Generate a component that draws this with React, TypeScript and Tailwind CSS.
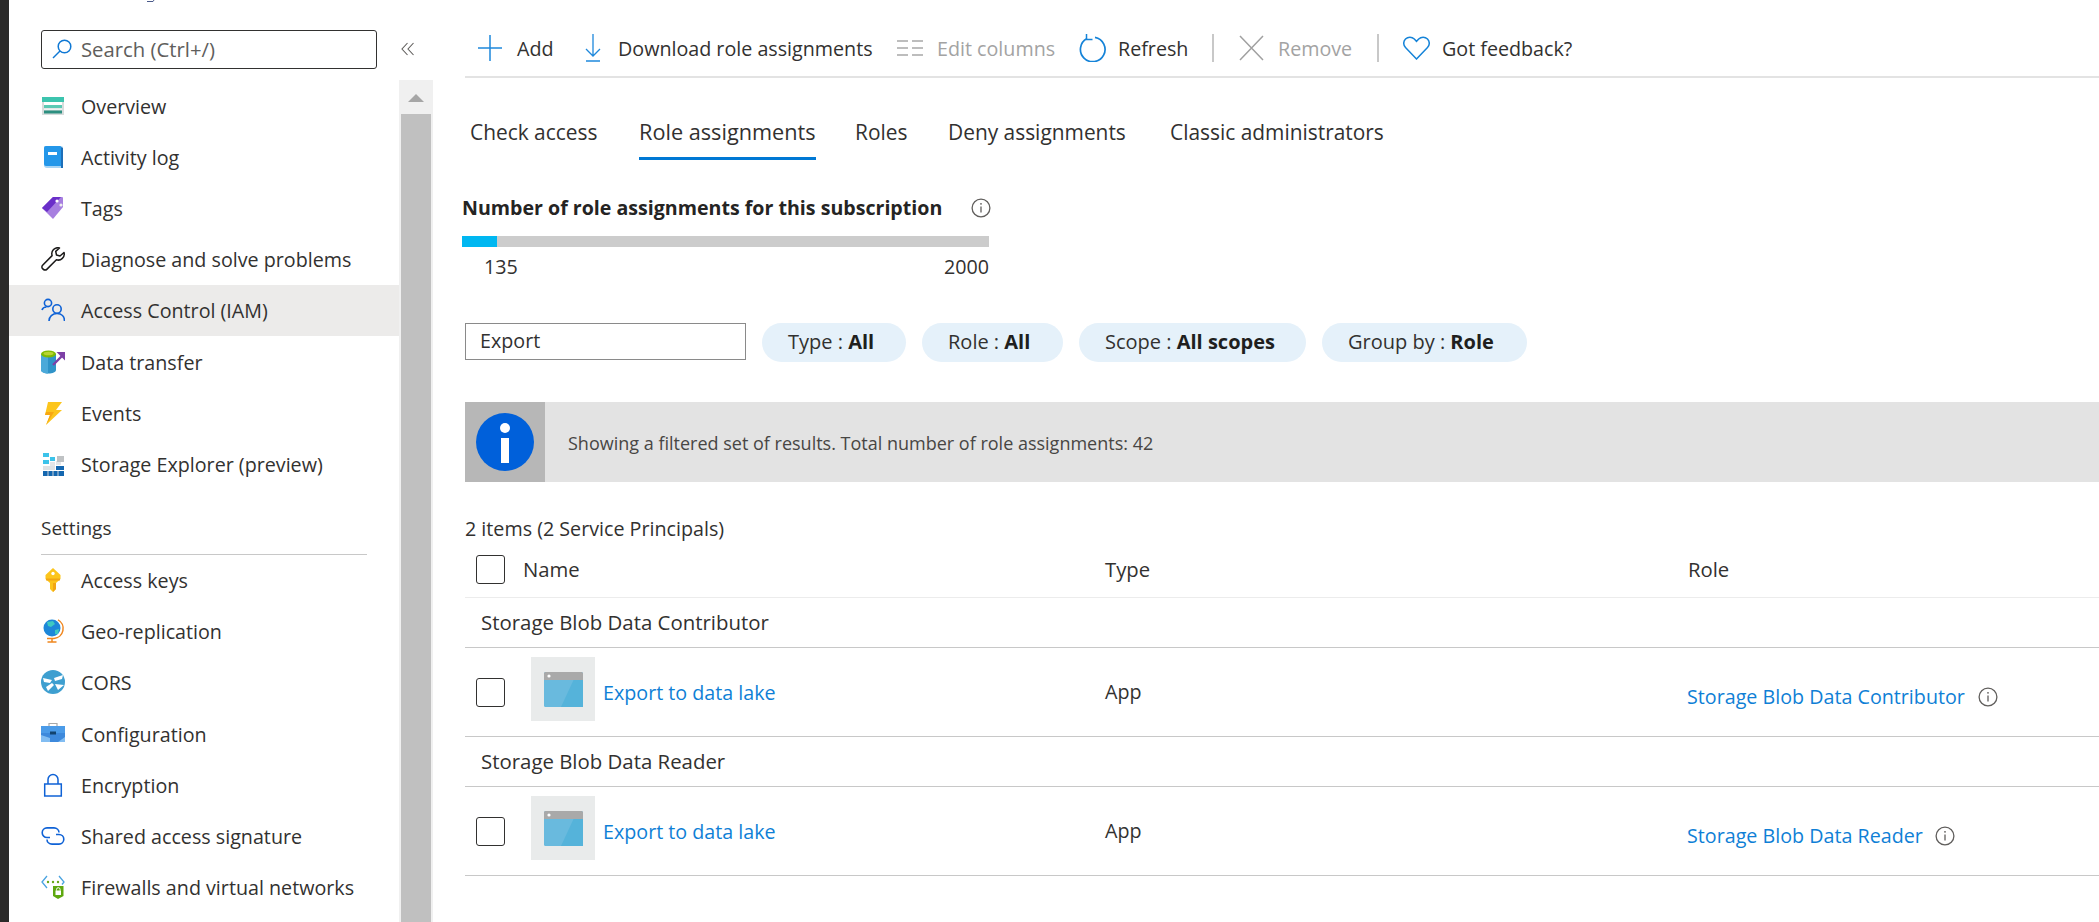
import React from "react";

const Ic = ({ children, w = 24, h = 24 }: { children: React.ReactNode; w?: number; h?: number }) => (
  <svg width={w} height={h} viewBox={`0 0 ${w} ${h}`} fill="none" className="block shrink-0">
    {children}
  </svg>
);

const Overview = () => (
  <Ic>
    <rect x="1" y="3" width="22" height="18" fill="#d8dcdc" />
    <rect x="1" y="3" width="22" height="5" fill="#3cc4ae" />
    <rect x="3" y="8" width="18" height="3" fill="#fff" />
    <rect x="3" y="11" width="18" height="3" fill="#5cc9b4" />
    <rect x="3" y="14.500" width="18" height="1.500" fill="#eef2f2" />
    <rect x="3" y="16.500" width="18" height="3" fill="#2c8f80" />
  </Ic>
);
const Book = () => (
  <Ic>
    <path d="M4 1h16a2 2 0 0 1 2 2v20H6a3 3 0 0 1-3-3V2z" fill="#a8d4f4" />
    <path d="M3 3a2 2 0 0 1 2-2h14a1 1 0 0 1 1 1v19H5a2 2 0 0 1-2-2z" fill="#2497e9" />
    <rect x="7" y="7" width="9" height="3" fill="#fff" />
    <path d="M20 2l2 1v20h-2z" fill="#1d6fb8" />
  </Ic>
);
const Tag = () => (
  <Ic>
    <path d="M1 12L12 1h9a1 1 0 0 1 1 1v9L12 23z" fill="#a77fe0" />
    <path d="M1 12L12 1h8L6 16z" fill="#6a2fc9" />
    <circle cx="16" cy="5" r="1.600" fill="#fff" />
    <circle cx="20" cy="9" r="1.600" fill="#eee" />
  </Ic>
);
const Wrench = () => (
  <Ic>
    <path
      d="M23 5.500l-4 3.500-3.500-1-.8-3.600L18.500 1a6 6 0 0 0-7.400 7.600L1.600 18.200a2.400 2.400 0 0 0 0 3.400l.8.8a2.400 2.400 0 0 0 3.400 0l9.600-9.600A6 6 0 0 0 23 5.500z"
      stroke="#1b1a19"
      strokeWidth="1.500"
      strokeLinejoin="round"
    />
  </Ic>
);
const People = () => (
  <Ic>
    <circle cx="7" cy="5" r="3.600" stroke="#0f62d6" strokeWidth="1.600" />
    <path d="M1 12c.6-2 2.600-3 4.500-3" stroke="#0f62d6" strokeWidth="1.600" />
    <circle cx="16" cy="11" r="4.200" stroke="#0f62d6" strokeWidth="1.600" />
    <path d="M8 23c0-4.500 3.500-7.500 8-7.500s7.500 3 7.500 7.500" stroke="#0f62d6" strokeWidth="1.600" />
  </Ic>
);
const Transfer = () => (
  <Ic>
    <path d="M0 4v16c0 2 3.500 3.500 7.500 3.500S15 22 15 20V4z" fill="#2f93c8" />
    <path d="M0 4v16c0 2 3.500 3.500 7 3.500V4z" fill="#4ba9d9" />
    <ellipse cx="7.500" cy="4" rx="7.500" ry="3.500" fill="#7fba00" />
    <ellipse cx="7.500" cy="3.500" rx="5" ry="1.800" fill="#b8d432" />
    <path d="M12 15L22 5" stroke="#7d3fa6" strokeWidth="2.400" />
    <path d="M15.500 2H24v8.500z" fill="#7d3fa6" />
  </Ic>
);
const Bolt = () => (
  <Ic>
    <path d="M7 1h14l-6 8h6L5 24l4-10H4z" fill="#fcc51c" />
    <path d="M5 24l4-10H4l1-3 8 0z" fill="#f7a711" />
  </Ic>
);
const Explorer = () => (
  <Ic>
    <rect x="2" y="1" width="6" height="4" fill="#3cc3ea" />
    <rect x="2" y="8" width="6" height="4" fill="#3cc3ea" />
    <rect x="9" y="5" width="5" height="4" fill="#3cc3ea" />
    <rect x="15" y="9" width="5" height="4" fill="#e4e6e8" />
    <rect x="9" y="10" width="5" height="4" fill="#e4e6e8" />
    <rect x="16" y="4" width="7" height="6" fill="#bfc2c4" />
    <rect x="15" y="14" width="8" height="4" fill="#1467b0" />
    <rect x="2" y="14" width="12" height="4" fill="#dfe2e4" />
    <rect x="2" y="19" width="21" height="5" fill="#1467b0" />
    <path d="M7 19v5M12 19v5M17 19v5" stroke="#cfd3d6" strokeWidth="1" />
  </Ic>
);
const Key = () => (
  <Ic>
    <path d="M12 0l7.500 7v4L15 15v6l-3 3-3-3v-6L4.500 11V7z" fill="#fcc51c" />
    <circle cx="12" cy="5.500" r="1.700" fill="#fff" />
    <path d="M5 10.500h14v2H5z" fill="#f2a614" />
    <path d="M12 15h3v6l-3 3z" fill="#f2a614" />
  </Ic>
);
const Globe = () => (
  <Ic>
    <circle cx="11" cy="9" r="8.500" fill="#1d87d9" />
    <path d="M6 3l6-1 2 3-4 3-3-1zM14 11l4-1-1 5-3 0z" fill="#3ec9c1" />
    <path d="M17 0.800a10 10 0 0 1-4 18.700H6" stroke="#f0861e" strokeWidth="1.500" />
    <path d="M11 19.500v3M6.500 23h9" stroke="#f0861e" strokeWidth="1.500" />
  </Ic>
);
const Cors = () => (
  <Ic>
    <circle cx="12" cy="12" r="12" fill="#3e9fd0" />
    <path d="M2 8l9 2-2 3-6-1zM22 5l-9 3 1 3 7-2zM7 21l6-6-2-2-6 4zM23 15l-9-1 3 6z" fill="#fff" />
  </Ic>
);
const Toolbox = () => (
  <Ic>
    <path d="M8 5V1.500h8V5" stroke="#a9a9a9" strokeWidth="1.200" />
    <rect x="0" y="4" width="24" height="7" fill="#4b9be8" />
    <rect x="0" y="11" width="24" height="9" fill="#3d89dc" />
    <path d="M0 13l9 3v4H0zM17 20l7-5v5z" fill="#82bdf2" />
    <rect x="9" y="9.500" width="6" height="3" fill="#12436e" />
  </Ic>
);
const Lock = () => (
  <Ic>
    <rect x="3.700" y="11" width="16.600" height="12" stroke="#0f62d6" strokeWidth="1.500" />
    <path d="M7 11V6.500a5 5 0 0 1 10 0V11" stroke="#0f62d6" strokeWidth="1.500" />
  </Ic>
);
const Chain = () => (
  <Ic>
    <path d="M9 13.500H6a4.800 4.800 0 0 1 0-9.600h7c2.800 0 5 2 5 4.600" stroke="#0f62d6" strokeWidth="1.600" />
    <path d="M15 10.500h3a4.800 4.800 0 0 1 0 9.600h-7c-2.800 0-5-2-5-4.600" stroke="#0f62d6" strokeWidth="1.600" />
  </Ic>
);
const Firewall = () => (
  <Ic>
    <path d="M6 1L1 7l5 6M18 1l5 6-2 2.500" stroke="#4aa3e0" strokeWidth="1.300" />
    <circle cx="7" cy="7" r="1.200" fill="#6aa81a" />
    <circle cx="12" cy="7" r="1.200" fill="#6aa81a" />
    <circle cx="17" cy="7" r="1.200" fill="#6aa81a" />
    <path d="M12 11h10.500v10L17 24l-5-3z" fill="#5ea80f" />
    <rect x="14.500" y="15.500" width="5.500" height="4.500" fill="#fff" />
    <path d="M15.500 15.500v-1a1.800 1.800 0 0 1 3.600 0v1" stroke="#fff" strokeWidth="1" />
  </Ic>
);

const first = [
  { t: "Overview", i: <Overview /> },
  { t: "Activity log", i: <Book /> },
  { t: "Tags", i: <Tag /> },
  { t: "Diagnose and solve problems", i: <Wrench /> },
  { t: "Access Control (IAM)", i: <People />, a: true },
  { t: "Data transfer", i: <Transfer /> },
  { t: "Events", i: <Bolt /> },
  { t: "Storage Explorer (preview)", i: <Explorer /> },
];
const second = [
  { t: "Access keys", i: <Key /> },
  { t: "Geo-replication", i: <Globe /> },
  { t: "CORS", i: <Cors /> },
  { t: "Configuration", i: <Toolbox /> },
  { t: "Encryption", i: <Lock /> },
  { t: "Shared access signature", i: <Chain /> },
  { t: "Firewalls and virtual networks", i: <Firewall /> },
];

const NavRow = ({ t, i, a }: { t: string; i: React.ReactNode; a?: boolean }) => (
  <div className={`h-[51.2px] flex items-center pl-[32px] gap-[16px] ${a ? "bg-[#ecebea]" : ""}`}>
    {i}
    <span className="whitespace-nowrap mt-[2px]">{t}</span>
  </div>
);

const InfoCircle = () => (
  <svg width="20" height="20" viewBox="0 0 20 20" fill="none" className="block shrink-0">
    <circle cx="10" cy="10" r="8.900" stroke="#605e5c" strokeWidth="1.300" />
    <path d="M10 8.500v6" stroke="#605e5c" strokeWidth="1.300" />
    <circle cx="10" cy="5.800" r="0.900" fill="#605e5c" />
  </svg>
);

const Tool = ({ w, iw, icon, text, muted }: { w: string; iw: string; icon: React.ReactNode; text: string; muted?: boolean }) => (
  <div className={`flex items-center shrink-0 ${w}`}>
    <div className={`shrink-0 ${iw}`}>{icon}</div>
    <span className={`whitespace-nowrap mt-[1px] ${muted ? "text-[#a3a3a3]" : ""}`}>{text}</span>
  </div>
);

const Chip = ({ w, a, b }: { w: string; a: string; b: string }) => (
  <div className={`h-[39px] pb-[2px] rounded-full bg-[#e5f1fa] flex items-center pl-[26px] text-[20px] whitespace-nowrap shrink-0 ${w}`}>
    {a}&nbsp;:&nbsp;<b className="font-bold text-[#201f1e]">{b}</b>
  </div>
);

const Check = () => <div className="w-[29px] h-[29px] rounded-[3px] border border-[#323130] shrink-0" />;

const AppThumb = () => (
  <div className="w-[64px] h-[64px] bg-[#e9ebeb] flex items-center justify-center shrink-0">
    <svg width="39" height="35" viewBox="0 0 39 35" className="block">
      <rect width="39" height="35" rx="1.500" fill="#69bade" />
      <path d="M17 35L30 7h9v28z" fill="#55b3da" />
      <path d="M0 1.500A1.500 1.500 0 0 1 1.500 0h36A1.500 1.500 0 0 1 39 1.500V8H0z" fill="#a9a9a9" />
      <circle cx="5" cy="4" r="1.600" fill="#fff" />
    </svg>
  </div>
);

const Group = ({ title, role, w }: { title: string; role: string; w: string }) => (
  <>
    <div className="h-[50px] pb-[1px] flex items-center pl-[16px] border-b border-[#c8c8c8] font-medium text-[20.4px]">{title}</div>
    <div className="h-[89px] grid grid-cols-[640px_583px_1fr] items-center border-b border-[#c8c8c8]">
      <div className="flex items-center pl-[11px]">
        <Check />
        <div className="ml-[26px] -mt-[6px]">
          <AppThumb />
        </div>
        <a className="ml-[8px] mt-[1px] text-[#0f7fd6] whitespace-nowrap">Export to data lake</a>
      </div>
      <div>App</div>
      <div className="flex items-center mt-[9px] -ml-[1px]">
        <a className={`text-[#0f7fd6] whitespace-nowrap ${w}`}>{role}</a>
        <InfoCircle />
      </div>
    </div>
  </>
);

export default function App() {
  return (
    <div className="relative flex w-[2099px] h-[922px] overflow-hidden bg-white text-[#323130] text-[19.7px] leading-[28px] font-['Open_Sans',sans-serif]">
      <div className="w-[9px] bg-[#2b2a29] shrink-0" />
      <svg width="10" height="3" viewBox="0 0 10 3" className="absolute left-[146px] top-0">
        <path d="M1 1.500h6L8 0" stroke="#4a5a8a" strokeWidth="1" fill="none" />
      </svg>

      <div className="w-[424px] shrink-0 flex flex-col">
        <div className="h-[80px] shrink-0 flex pt-[30px] pl-[32px]">
          <div className="w-[336px] h-[39px] pb-[2px] rounded-[3px] border border-[#323130] flex items-center pl-[10px] gap-[9px] text-[#605e5c] text-[20.3px]">
            <svg width="20" height="20" viewBox="0 0 20 20" fill="none" className="shrink-0">
              <circle cx="12.500" cy="7.500" r="6.300" stroke="#0f78d4" strokeWidth="1.500" />
              <path d="M8 12L1 19" stroke="#0f78d4" strokeWidth="1.500" />
            </svg>
            Search (Ctrl+/)
          </div>
          <svg width="14" height="14" viewBox="0 0 14 14" fill="none" className="ml-[24px] mt-[12px] shrink-0">
            <path d="M6.500 1L1 7l5.500 6M12.500 1L7 7l5.500 6" stroke="#605e5c" strokeWidth="1.100" />
          </svg>
        </div>
        <div className="flex flex-1 min-h-0">
          <div className="w-[390px] shrink-0">
            {first.map((r) => (
              <NavRow key={r.t} {...r} />
            ))}
            <div className="h-[65px] mx-[32px] pt-[24px] border-b border-[#c8c8c8] font-medium text-[19px] w-[326px]">Settings</div>
            {second.map((r) => (
              <NavRow key={r.t} {...r} />
            ))}
          </div>
          <div className="w-[34px] shrink-0 bg-[#f0f0f0] flex flex-col">
            <div className="h-[34px] shrink-0 flex justify-center pt-[14px]">
              <div className="w-0 h-0 border-l-[8px] border-r-[8px] border-b-[8px] border-l-transparent border-r-transparent border-b-[#a6a6a6]" />
            </div>
            <div className="flex-1 mx-[2px] bg-[#c0c0c0]" />
          </div>
        </div>
      </div>

      <div className="flex-1 min-w-0 flex flex-col pl-[32px]">
        <div className="h-[78px] pt-[20px] shrink-0 border-b-2 border-[#e3e3e3] flex items-center pl-[13px]">
          <Tool
            w="w-[107px]"
            iw="w-[39px]"
            text="Add"
            icon={
              <svg width="24" height="26" viewBox="0 0 24 26" fill="none" className="block">
                <path d="M12 0v26M0 13h24" stroke="#1e88dc" strokeWidth="1.500" />
              </svg>
            }
          />
          <Tool
            w="w-[312px]"
            iw="w-[33px]"
            text="Download role assignments"
            icon={
              <svg width="16" height="28" viewBox="0 0 16 28" fill="none" className="block">
                <path d="M8 0v22M1 15l7 7 7-7" stroke="#1e88dc" strokeWidth="1.300" />
                <path d="M1 27h14" stroke="#1e88dc" strokeWidth="1.500" />
              </svg>
            }
          />
          <Tool
            w="w-[182px]"
            iw="w-[40px]"
            text="Edit columns"
            muted
            icon={
              <svg width="26" height="16" viewBox="0 0 26 16" fill="none" className="block">
                <path d="M0 1h11M15 1h11M0 8h11M15 8h11M0 15h11M15 15h11" stroke="#a8a8a8" strokeWidth="1.300" />
              </svg>
            }
          />
          <Tool
            w="w-[133px]"
            iw="w-[39px]"
            text="Refresh"
            icon={
              <svg width="27" height="28" viewBox="0 0 27 28" fill="none" className="block">
                <path d="M8 4.500a12.300 12.300 0 1 0 8-1.200" stroke="#1583d8" strokeWidth="1.700" />
                <path d="M7.500 0v5.500h6" stroke="#1583d8" strokeWidth="1.500" />
              </svg>
            }
          />
          <div className="w-[2px] h-[28px] bg-[#c8c8c8] shrink-0" />
          <div className="w-[25px] shrink-0" />
          <Tool
            w="w-[138px]"
            iw="w-[39px]"
            text="Remove"
            muted
            icon={
              <svg width="25" height="26" viewBox="0 0 25 26" fill="none" className="block">
                <path d="M1 1l23 24M24 1L1 25" stroke="#a0a0a0" strokeWidth="1.500" />
              </svg>
            }
          />
          <div className="w-[2px] h-[28px] bg-[#c8c8c8] shrink-0" />
          <div className="w-[24px] shrink-0" />
          <Tool
            w="w-[200px]"
            iw="w-[39px]"
            text="Got feedback?"
            icon={
              <svg width="27" height="24" viewBox="0 0 27 24" fill="none" className="block">
                <path
                  d="M13.500 23L2.500 11.500a6 6 0 0 1 0-8.500 6.300 6.300 0 0 1 8.800 0l2.200 2.300 2.200-2.300a6.300 6.300 0 0 1 8.800 0 6 6 0 0 1 0 8.500z"
                  stroke="#1583d8"
                  strokeWidth="1.500"
                />
              </svg>
            }
          />
        </div>

        <div className="flex shrink-0 pl-[5px] h-[82px] text-[20.9px]">
          {[
            ["Check access", "w-[169px]"],
            ["Role assignments", "w-[216px]"],
            ["Roles", "w-[93px]"],
            ["Deny assignments", "w-[222px]"],
            ["Classic administrators", "w-[220px]"],
          ].map(([t, w]) => (
            <div key={t} className={`pt-[40px] whitespace-nowrap shrink-0 ${w}`}>
              {t === "Role assignments" ? (
                <div className="inline-block h-[42px] pb-[11px] border-b-[3px] border-[#0078d4] font-medium text-[21.7px]">{t}</div>
              ) : (
                t
              )}
            </div>
          ))}
        </div>

        <div className="-ml-[3px] mt-[34px] flex items-center shrink-0">
          <span className="font-bold text-[#252423] text-[19.6px] w-[509px]">Number of role assignments for this subscription</span>
          <InfoCircle />
        </div>
        <div className="-ml-[3px] mt-[14px] w-[527px] h-[11px] bg-[#cccccc] shrink-0">
          <div className="w-[35px] h-full bg-[#00b7f1]" />
        </div>
        <div className="-ml-[3px] mt-[6px] w-[527px] flex justify-between pl-[22px] shrink-0">
          <span>135</span>
          <span>2000</span>
        </div>

        <div className="mt-[42px] flex gap-[16px] shrink-0">
          <div className="w-[281px] h-[37px] pb-[2px] border border-[#8a8a8a] pl-[14px] flex items-center shrink-0">Export</div>
          <Chip w="w-[144px]" a="Type" b="All" />
          <Chip w="w-[141px]" a="Role" b="All" />
          <Chip w="w-[227px]" a="Scope" b="All scopes" />
          <Chip w="w-[205px]" a="Group by" b="Role" />
        </div>

        <div className="mt-[40px] h-[80px] bg-[#e3e3e3] flex items-center shrink-0">
          <div className="w-[80px] h-full bg-[#b7b7b7] flex items-center justify-center shrink-0">
            <svg width="58" height="58" viewBox="0 0 58 58" className="block">
              <circle cx="29" cy="29" r="29" fill="#0060da" />
              <circle cx="29" cy="15" r="5" fill="#fff" />
              <rect x="25" y="25" width="8" height="25" fill="#fff" />
            </svg>
          </div>
          <span className="ml-[23px] mt-[1px] text-[18px] text-[#484644] whitespace-nowrap">
            Showing a filtered set of results. Total number of role assignments: 42
          </span>
        </div>

        <div className="mt-[33px] shrink-0">2 items (2 Service Principals)</div>

        <div className="h-[55px] pb-[2px] grid grid-cols-[640px_583px_1fr] items-center border-b border-[#ececec] font-medium text-[20.3px] shrink-0">
          <div className="flex items-center pl-[11px] gap-[18px]">
            <Check />
            <span>Name</span>
          </div>
          <div>Type</div>
          <div>Role</div>
        </div>
        <Group title="Storage Blob Data Contributor" role="Storage Blob Data Contributor" w="w-[291px]" />
        <Group title="Storage Blob Data Reader" role="Storage Blob Data Reader" w="w-[248px]" />
      </div>
    </div>
  );
}
